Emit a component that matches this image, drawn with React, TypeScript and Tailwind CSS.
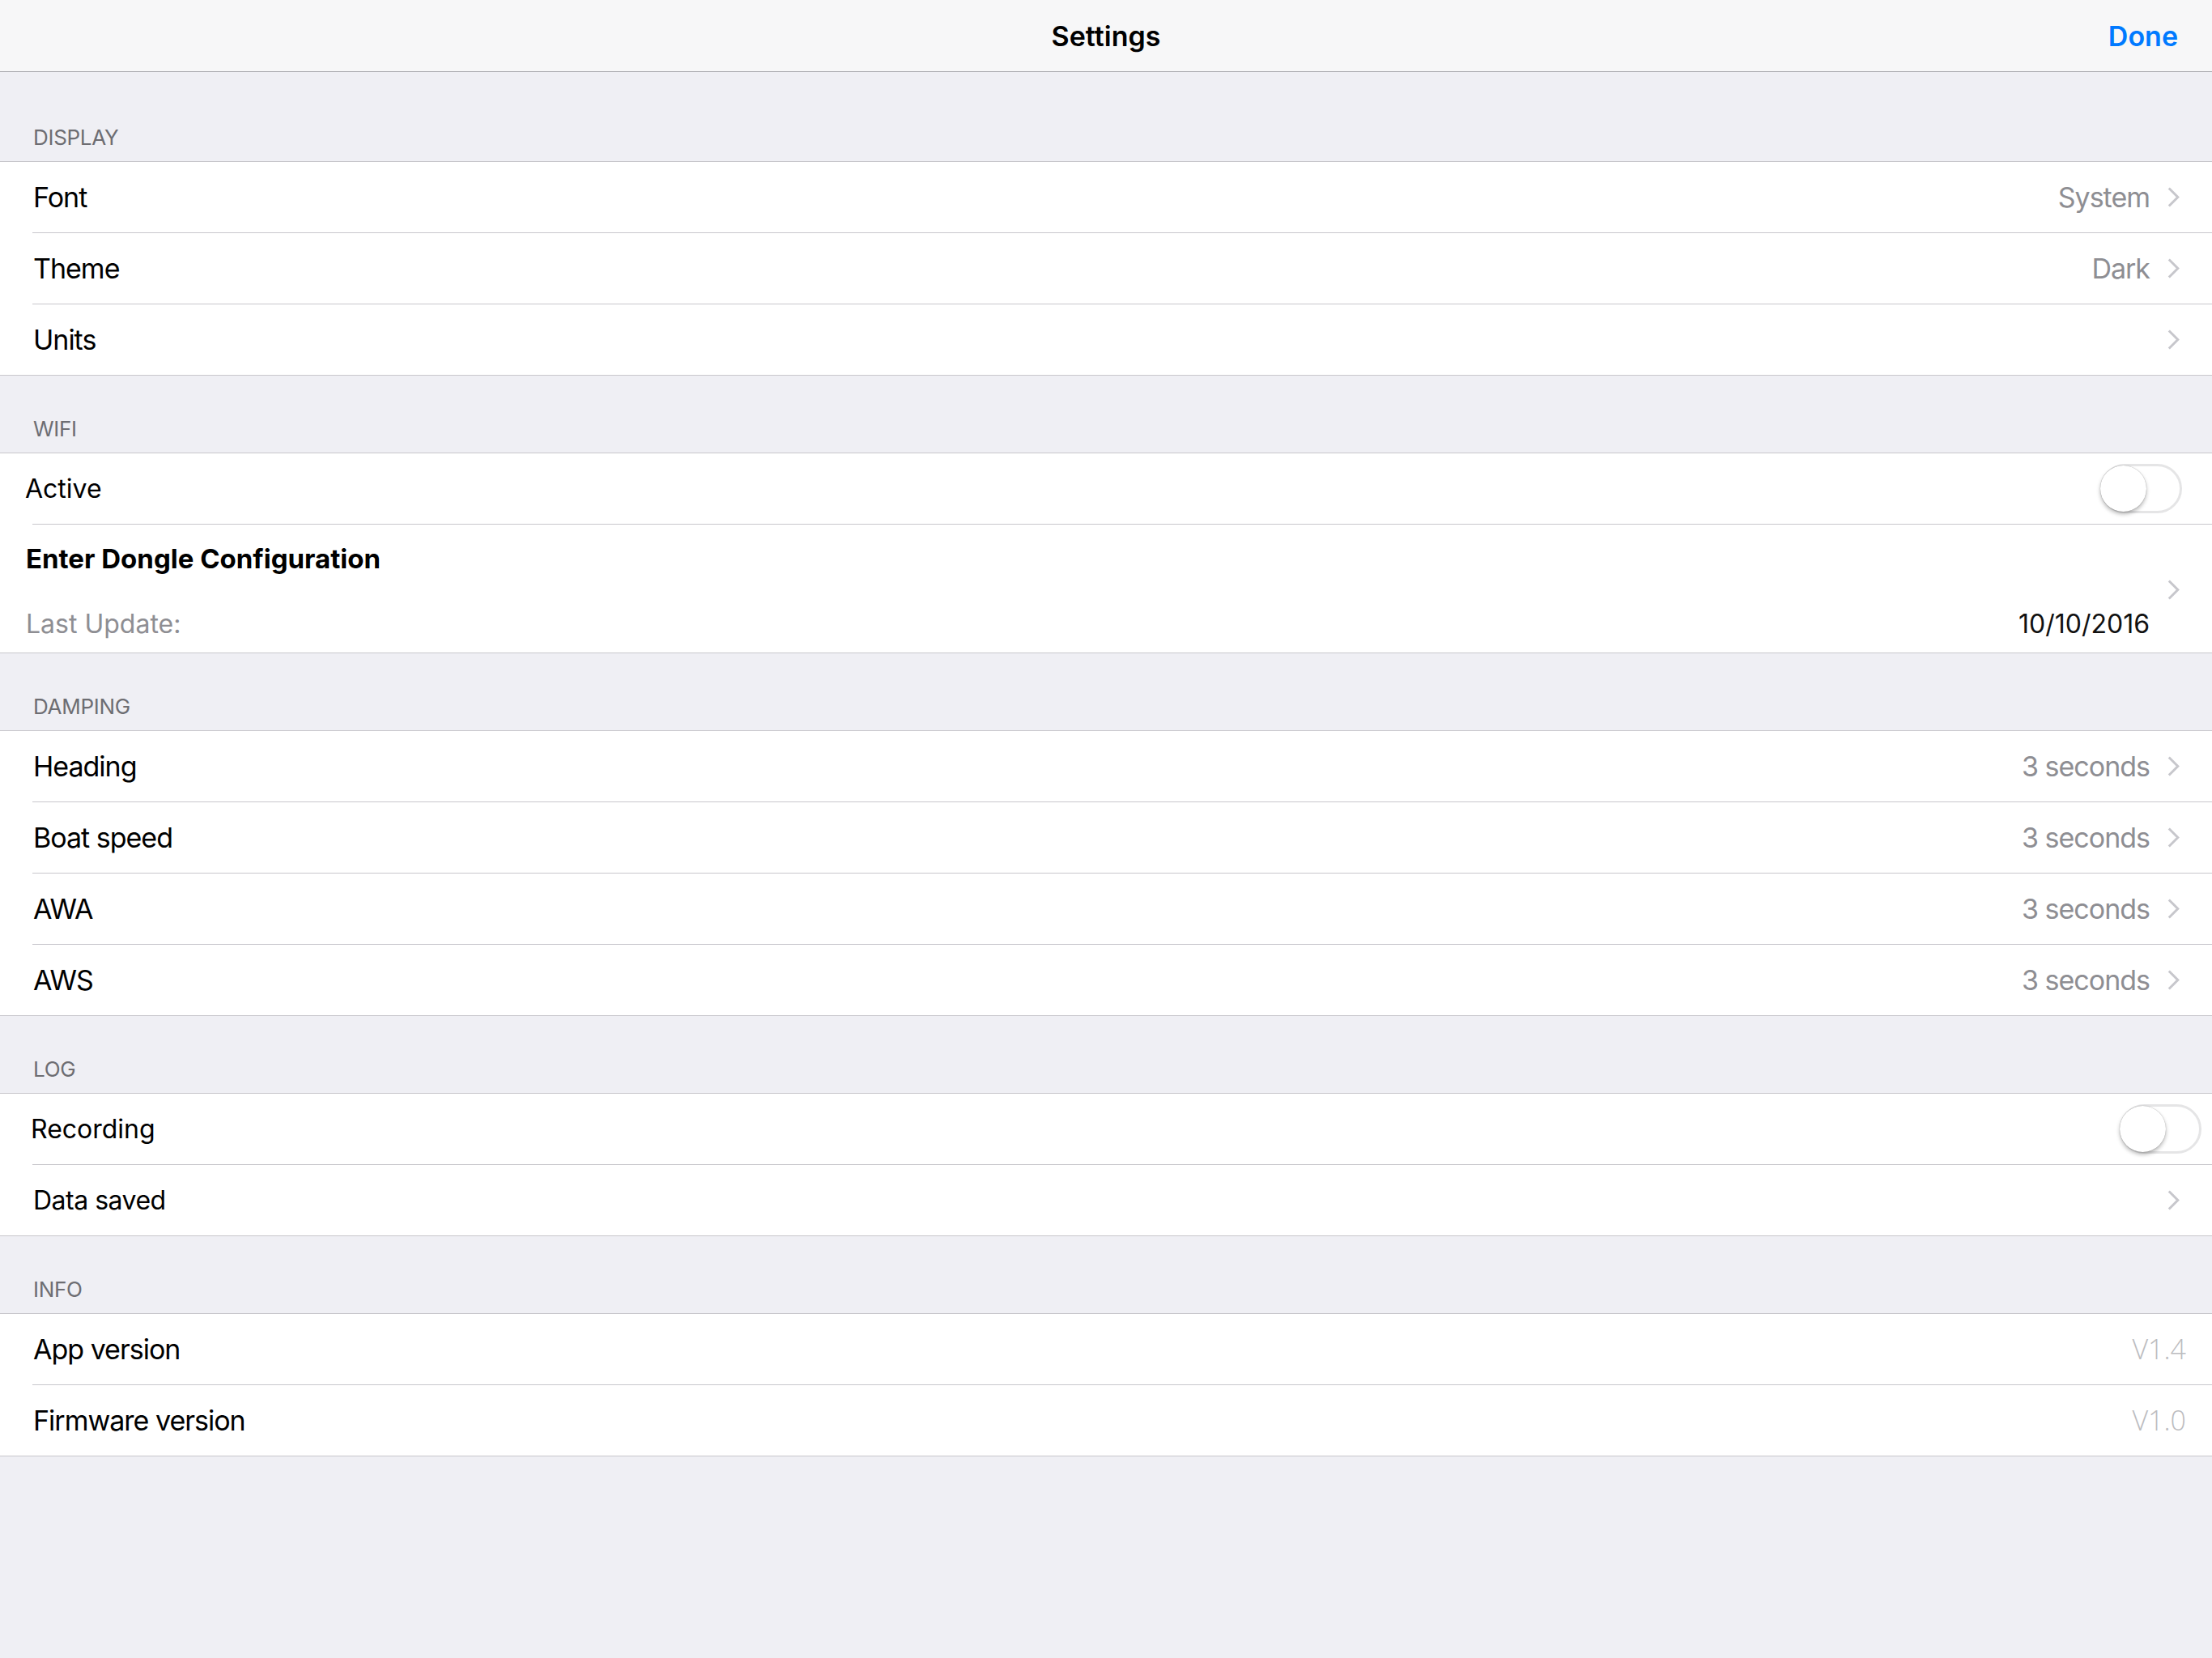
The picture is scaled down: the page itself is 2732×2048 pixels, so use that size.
type Item = {
  label: string
  value?: string
  chevron?: boolean
}

const display: Item[] = [
  { label: 'Font', value: 'System', chevron: true },
  { label: 'Theme', value: 'Dark', chevron: true },
  { label: 'Units', chevron: true },
]

const damping: Item[] = [
  { label: 'Heading', value: '3 seconds', chevron: true },
  { label: 'Boat speed', value: '3 seconds', chevron: true },
  { label: 'AWA', value: '3 seconds', chevron: true },
  { label: 'AWS', value: '3 seconds', chevron: true },
]

function Chevron() {
  return (
    <svg width="15" height="25" viewBox="0 0 15 25" fill="none" className="shrink-0">
      <path d="M1.8 1.5L12.8 12.5L1.8 23.5" stroke="#c7c7cc" strokeWidth="3" />
    </svg>
  )
}

function Switch() {
  return (
    <div className="relative h-[61px] w-[101px] shrink-0 rounded-full border-[3px] border-[#e5e5e6] bg-white">
      <div className="absolute top-[-1px] left-[-3px] h-[57px] w-[57px] rounded-full bg-white shadow-[0_3px_5px_rgba(0,0,0,0.28),0_0_1px_rgba(0,0,0,0.4)]" />
    </div>
  )
}

function Separator() {
  return <div className="ml-[40px] h-px bg-[#c8c7cc]" />
}

function SectionHeader({ title, first = false }: { title: string; first?: boolean }) {
  return (
    <div
      className={
        first
          ? 'flex h-[110px] items-end pb-[16px] pl-[41px] text-[26px] leading-[26px] tracking-[-0.3px] text-[#6d6d72]'
          : 'flex h-[95px] items-end pb-[16px] pl-[41px] text-[26px] leading-[26px] tracking-[-0.3px] text-[#6d6d72]'
      }
    >
      {title}
    </div>
  )
}

function Section({ children }: { children: React.ReactNode }) {
  return <div className="border-y border-[#c8c7cc] bg-white">{children}</div>
}

function NavRow({ item }: { item: Item }) {
  return (
    <div className="flex h-[87px] items-center pr-[40px] pl-[41px] text-[34px] tracking-[-1px] text-black">
      <span className="flex-1">{item.label}</span>
      {item.value && <span className="mr-[22px] text-[#8e8e93]">{item.value}</span>}
      {item.chevron && <Chevron />}
    </div>
  )
}

function InfoRow({ label, value }: { label: string; value: string }) {
  return (
    <div className="flex h-[87px] items-center pr-[32px] pl-[41px] text-[34px] text-black">
      <span className="flex-1 tracking-[-1px]">{label}</span>
      <span className="font-['Open_Sans',sans-serif] font-light text-[#bcbcc0]">{value}</span>
    </div>
  )
}

export default function App() {
  return (
    <div className="min-h-screen bg-[#efeff4] font-['Inter',sans-serif] antialiased">
      <header className="grid h-[89px] grid-cols-3 items-center border-b border-[#a8a8ac] bg-[#f7f7f8]">
        <div />
        <h1 className="justify-self-center text-[34px] font-semibold text-black">Settings</h1>
        <button className="justify-self-end pr-[42px] text-[34px] font-semibold text-[#007aff]">Done</button>
      </header>

      <SectionHeader title="DISPLAY" first />
      <Section>
        {display.map((item, i) => (
          <div key={item.label}>
            {i > 0 && <Separator />}
            <NavRow item={item} />
          </div>
        ))}
      </Section>

      <SectionHeader title="WIFI" />
      <Section>
        <div className="flex h-[87px] items-center pr-[37px] pl-[31px] text-[32px] text-black">
          <span className="flex-1">Active</span>
          <Switch />
        </div>
        <Separator />
        <div className="flex h-[158px] pr-[40px] pl-[32px] text-[32px] leading-[38px]">
          <div className="flex flex-1 flex-col pt-[23px] pr-[22px]">
            <span className="text-[33px] font-bold text-black">Enter Dongle Configuration</span>
            <div className="mt-[43px] flex justify-between">
              <span className="text-[#8e8e93]">Last Update:</span>
              <span className="text-[#111]">10/10/2016</span>
            </div>
          </div>
          <div className="self-center pt-[2px]">
            <Chevron />
          </div>
        </div>
      </Section>

      <SectionHeader title="DAMPING" />
      <Section>
        {damping.map((item, i) => (
          <div key={item.label}>
            {i > 0 && <Separator />}
            <NavRow item={item} />
          </div>
        ))}
      </Section>

      <SectionHeader title="LOG" />
      <Section>
        <div className="flex h-[87px] items-center pr-[13px] pl-[38px] text-[32px] text-black">
          <span className="flex-1">Recording</span>
          <Switch />
        </div>
        <Separator />
        <div className="flex h-[87px] items-center pr-[40px] pl-[41px] text-[32px] tracking-[-0.5px] text-black">
          <span className="flex-1">Data saved</span>
          <Chevron />
        </div>
      </Section>

      <SectionHeader title="INFO" />
      <Section>
        <InfoRow label="App version" value="V1.4" />
        <Separator />
        <InfoRow label="Firmware version" value="V1.0" />
      </Section>
    </div>
  )
}
